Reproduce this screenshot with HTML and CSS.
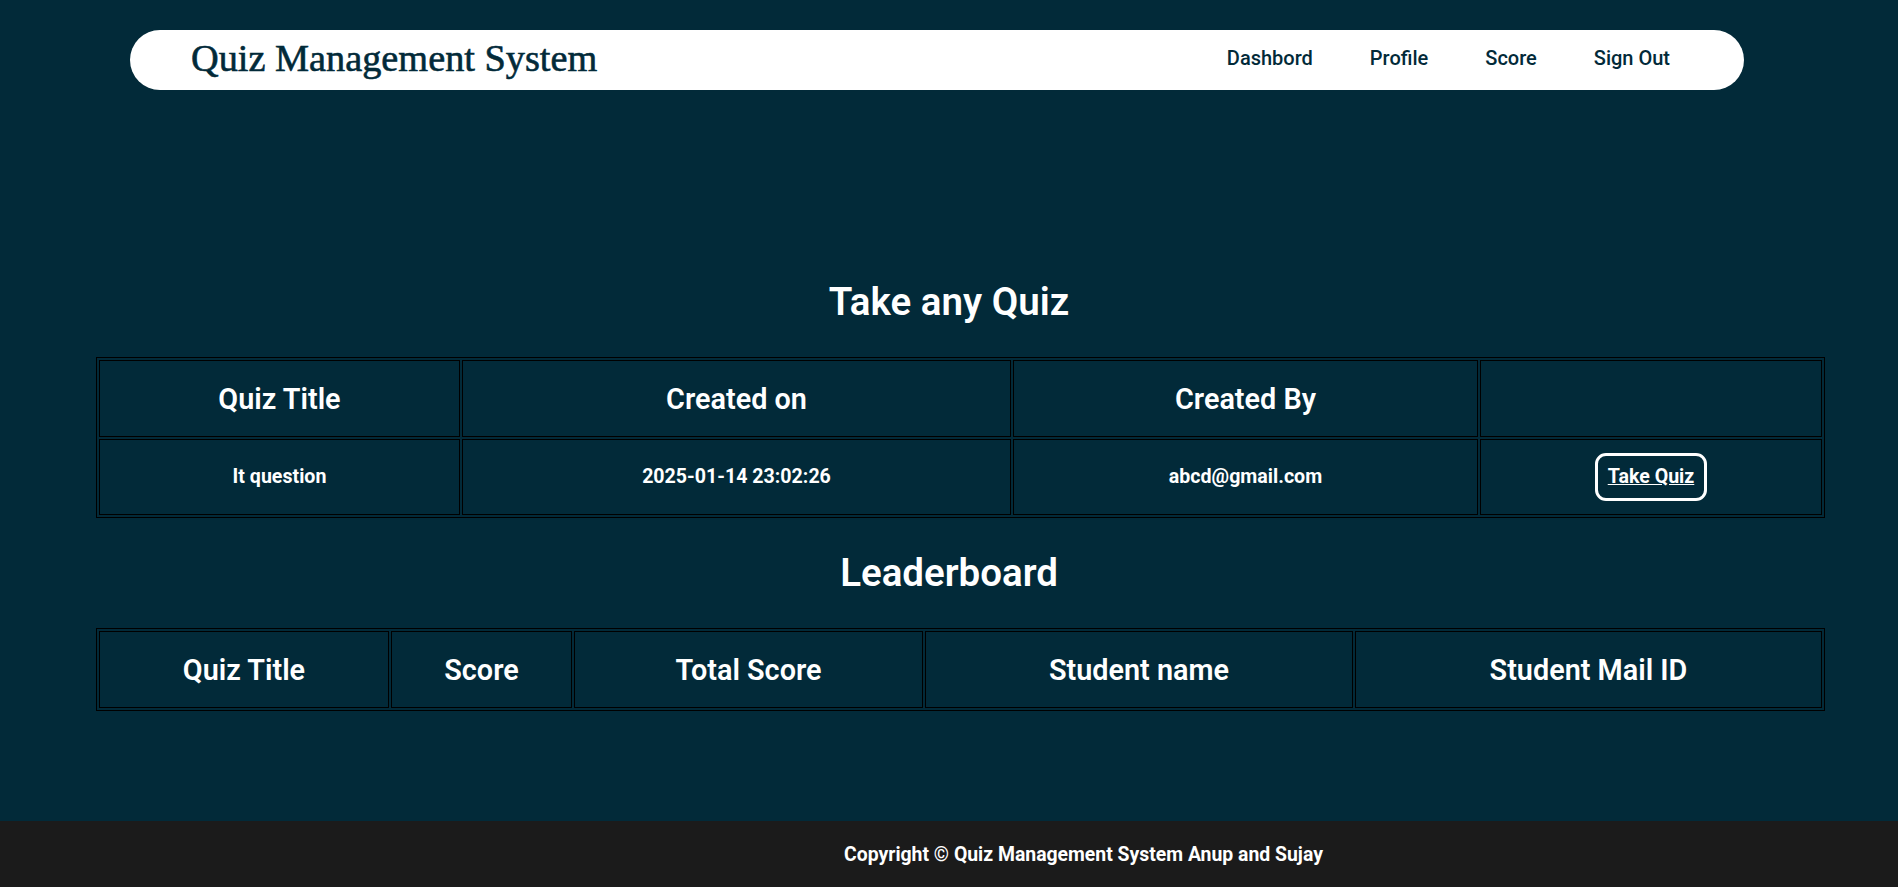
FILE: index.html
```html
<!DOCTYPE html>
<html lang="en">
<head>
<meta charset="utf-8">
<title>Quiz Management System</title>
<link rel="stylesheet" href="styles.css">
</head>
<body>
<header class="topbar">
  <div class="brand">Quiz Management System</div>
  <nav>
    <ul class="nav-links">
      <li><a href="#">Dashbord</a></li>
      <li><a href="#">Profile</a></li>
      <li><a href="#">Score</a></li>
      <li><a href="#">Sign Out</a></li>
    </ul>
  </nav>
</header>

<main class="content">
  <h2 class="section-title">Take any Quiz</h2>
  <table class="grid">
    <colgroup>
      <col class="q1"><col class="q2"><col class="q3"><col class="q4">
    </colgroup>
    <thead>
      <tr><th>Quiz Title</th><th>Created on</th><th>Created By</th><th></th></tr>
    </thead>
    <tbody>
      <tr>
        <td>It question</td>
        <td>2025-01-14 23:02:26</td>
        <td>abcd@gmail.com</td>
        <td><a class="take-btn" href="#">Take Quiz</a></td>
      </tr>
    </tbody>
  </table>

  <h2 class="section-title">Leaderboard</h2>
  <table class="grid">
    <colgroup>
      <col class="l1"><col class="l2"><col class="l3"><col class="l4"><col class="l5">
    </colgroup>
    <thead>
      <tr><th>Quiz Title</th><th>Score</th><th>Total Score</th><th>Student name</th><th>Student Mail ID</th></tr>
    </thead>
  </table>
</main>

<footer class="footer">
  <p>Copyright © Quiz Management System Anup and Sujay</p>
</footer>
</body>
</html>
```

FILE: styles.css
```css
* {
  box-sizing: border-box;
}

html, body {
  margin: 0;
  padding: 0;
}

body {
  background: #022a39;
  min-height: 100vh;
  display: flex;
  flex-direction: column;
  font-family: Roboto, "Liberation Sans", Arial, sans-serif;
  color: #ffffff;
}

.topbar {
  margin: 30px 154px 0 130px;
  height: 60px;
  background: #ffffff;
  border-radius: 30px;
  display: flex;
  align-items: center;
  justify-content: space-between;
  padding: 0 74px 4px 61px;
}

.brand {
  font-family: "Liberation Serif", "Times New Roman", serif;
  font-size: 38.3px;
  line-height: 44px;
  color: #022a39;
  -webkit-text-stroke: 0.6px #022a39;
}

.nav-links {
  list-style: none;
  margin: 0;
  padding: 0;
  display: flex;
  gap: 57px;
}

.nav-links a {
  font-family: Roboto, sans-serif;
  font-weight: 500;
  font-size: 20px;
  line-height: 24px;
  color: #022a39;
  text-decoration: none;
}

.content {
  flex: 1;
  padding-top: 157px;
}

.section-title {
  margin: 32px 0;
  text-align: center;
  font-size: 38.5px;
  line-height: 46px;
  font-weight: 600;
}

.grid {
  width: 1729px;
  margin-left: 96px;
  table-layout: fixed;
  border-collapse: separate;
  border-spacing: 2px;
  border: 1px solid #000;
}

.grid th,
.grid td {
  border: 1px solid #000;
  text-align: center;
  vertical-align: middle;
}

.grid th {
  font-size: 28.8px;
  line-height: 34px;
  font-weight: 600;
  padding: 20px 0;
  height: 77px;
}

.grid td {
  font-size: 19.6px;
  line-height: 24px;
  font-weight: 700;
  padding: 13px 0;
  height: 76px;
}

.q1 { width: 361px; }
.q2 { width: 549px; }
.q3 { width: 465px; }
.q4 { width: 342px; }

.l1 { width: 290px; }
.l2 { width: 181px; }
.l3 { width: 349px; }
.l4 { width: 428px; }
.l5 { width: 467px; }

.take-btn {
  display: inline-block;
  color: #ffffff;
  text-decoration: underline;
  font-size: 19.6px;
  line-height: 24px;
  font-weight: 700;
  padding: 9px 10px;
  border: 3px solid #ffffff;
  border-radius: 11px;
}

.footer {
  height: 66px;
  background: #1b1b1b;
  display: flex;
  align-items: center;
  justify-content: center;
  padding-left: 269px;
}

.footer p {
  margin: 0;
  font-size: 19.4px;
  font-weight: 700;
  color: #ffffff;
}
```
